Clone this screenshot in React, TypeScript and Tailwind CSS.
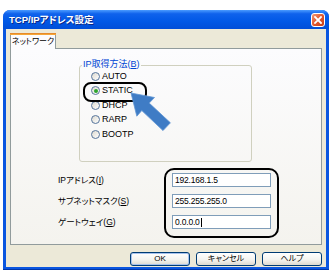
import React from "react";

const F = "font-['Liberation_Sans','Noto_Sans_CJK_JP',sans-serif] [font-feature-settings:'palt']";

function Radio({ label, checked }: { label: string; checked?: boolean }) {
  return (
    <div className="flex items-center h-[14.5px] gap-[2px]">
      <div className="w-[9px] h-[9px] rounded-full border border-[#56759c] bg-[linear-gradient(135deg,#dcd9cf,#ffffff)] flex items-center justify-center">
        {checked && <div className="w-[4px] h-[4px] rounded-full bg-[#2da52d]" />}
      </div>
      <span className={`${F} text-[9px] leading-none text-black`}>{label}</span>
    </div>
  );
}

function Field({ label, mn, value, caret }: { label: string; mn: string; value: string; caret?: boolean }) {
  return (
    <div className="flex items-center h-[14px]">
      <div className={`${F} w-[114px] text-[8.5px] leading-none text-black whitespace-nowrap`}>
        {label}(<span className="underline">{mn}</span>)
      </div>
      <div className="w-[99px] h-[14px] border border-[#7f9db9] bg-white flex items-center pl-[2px]">
        <span className={`${F} text-[8.5px] leading-none text-black tracking-[-0.2px]`}>{value}</span>
        {caret && <span className="w-px h-[9px] bg-black ml-px" />}
      </div>
    </div>
  );
}

function Btn({ children, def }: { children: React.ReactNode; def?: boolean }) {
  return (
    <div
      className={`${F} w-[60px] h-[14px] border border-[#003c74] rounded-[3px] bg-[linear-gradient(to_bottom,#ffffff,#f4f4f0_55%,#dedad0)] flex items-center justify-center text-[8px] leading-none text-black whitespace-nowrap ${
        def ? "shadow-[inset_0_0_0_1px_#a6c2ee]" : ""
      }`}
    >
      {children}
    </div>
  );
}

export default function App() {
  return (
    <div className="relative w-[336px] h-[272px] bg-white overflow-hidden pt-[10px] pl-[3px]">
      <div className="w-[326px] h-[260px] rounded-t-[7px] flex flex-col bg-[#0a56e0] shadow-[inset_0_-1px_0_#0036a8]">
        {/* title bar */}
        <div className="h-[19px] rounded-t-[7px] flex items-center justify-between pl-[6px] pr-[4px] bg-[linear-gradient(to_bottom,#4a9bff_0%,#0f62ec_20%,#0058e6_60%,#004ed8_100%)]">
          <span className={`${F} text-[9.5px] font-bold leading-none text-white whitespace-nowrap [text-shadow:1px_1px_0_#0a2a8a]`}>
            TCP/IPアドレス設定
          </span>
          <div className="w-[14px] h-[14px] rounded-[3px] border border-white bg-[linear-gradient(135deg,#f09a78,#e2582e_50%,#c53d17)] flex items-center justify-center">
            <svg width="8" height="8" viewBox="0 0 8 8">
              <path d="M1 1L7 7M7 1L1 7" stroke="white" strokeWidth="1.8" strokeLinecap="square" />
            </svg>
          </div>
        </div>
        {/* body */}
        <div className="flex-1 mx-[3px] mb-[3px] bg-[#ece9d8] flex flex-col px-[4px] pt-[4px]">
          <div className="flex h-[16px] -mb-px relative z-10">
            <div className="w-[46px] h-[16px] border-x border-[#919b9c] bg-[#fcfcfe] flex flex-col">
              <div className="h-[2px] bg-[#f5a637] -mx-px border-t border-[#e68b2c]" />
              <div className={`${F} flex-1 flex items-center justify-center text-[8px] leading-none text-black whitespace-nowrap`}>
                ネットワーク
              </div>
            </div>
          </div>
          <div className="h-[197px] border border-[#919b9c] bg-[linear-gradient(to_bottom,#fcfcfe,#f4f3ee)] flex flex-col">
            <div className="relative mt-[16px] ml-[68px] w-[173px] h-[97px] border border-[#d0d0bf] rounded-[3px] pt-[3px] pl-[11px]">
              <span className={`${F} absolute -top-[6px] left-[2px] px-[1px] bg-[#fbfbfa] text-[9px] leading-none text-[#0046d5] whitespace-nowrap`}>
                IP取得方法(<span className="underline">B</span>)
              </span>
              <Radio label="AUTO" />
              <Radio label="STATIC" checked />
              <Radio label="DHCP" />
              <Radio label="RARP" />
              <Radio label="BOOTP" />
            </div>
            <div className="mt-[11px] ml-[47px] flex flex-col gap-[7px]">
              <Field label="IPアドレス" mn="I" value="192.168.1.5" />
              <Field label="サブネットマスク" mn="S" value="255.255.255.0" />
              <Field label="ゲートウェイ" mn="G" value="0.0.0.0" caret />
            </div>
          </div>
          <div className="mt-[7px] flex justify-end gap-[6px]">
            <Btn def>OK</Btn>
            <Btn>キャンセル</Btn>
            <Btn>ヘルプ</Btn>
          </div>
        </div>
      </div>

      {/* annotations */}
      <div className="absolute left-[83px] top-[82px] w-[64px] h-[20px] border-2 border-black rounded-[8px]" />
      <div className="absolute left-[164px] top-[168px] w-[115px] h-[70px] border-2 border-black rounded-[10px]" />
      <svg className="absolute left-0 top-0 pointer-events-none" width="336" height="272" viewBox="0 0 336 272">
        <polygon
          points="131,93 154.5,97.5 149.2,103.1 170.4,122.8 163,130.6 141.8,110.6 136.8,116.2"
          fill="#3f7cc5"
          stroke="#5f95d4"
          strokeWidth="0.8"
          strokeLinejoin="round"
        />
      </svg>
    </div>
  );
}
